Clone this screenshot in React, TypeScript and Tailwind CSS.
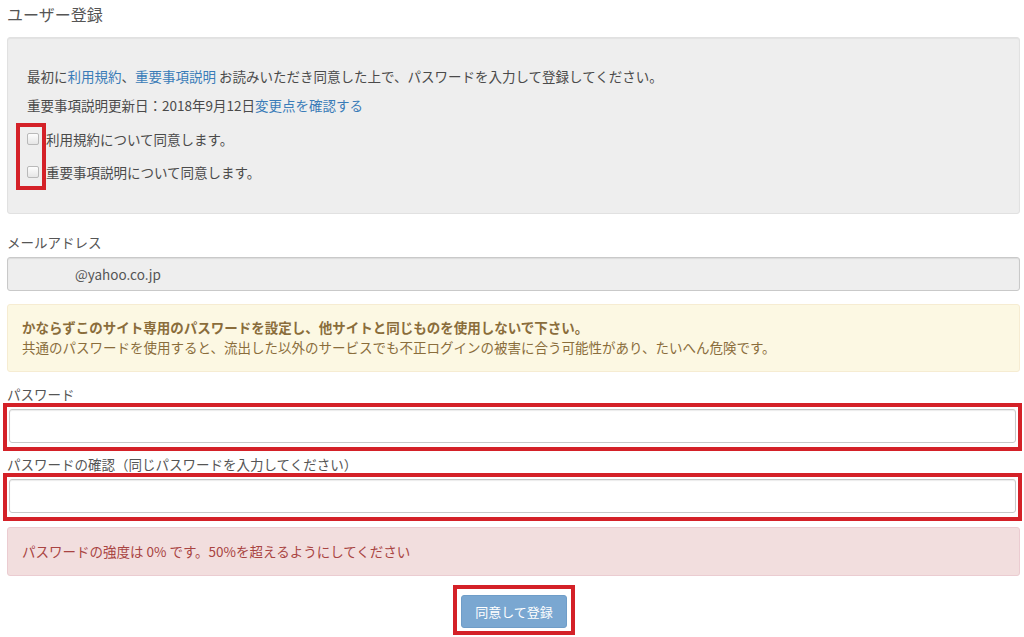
import React from 'react';

const font = { fontFamily: '"Noto Sans CJK JP", "Noto Sans", sans-serif' };

function Check() {
    return (
        <span className="inline-block h-[12px] w-[12px] shrink-0 rounded-[2px] border border-[#b9b9b9] bg-gradient-to-b from-[#fdfdfd] to-[#e6e6e6]" />
    );
}

function Field({ value }: { value?: string }) {
    return (
        <div className="h-[34px] rounded-[3px] border border-[#c9c9c9] bg-white shadow-[inset_0_1px_1px_rgba(0,0,0,0.08)]">
            {value}
        </div>
    );
}

export default function App() {
    return (
        <div style={font} className="h-[637px] w-[1024px] overflow-hidden bg-white text-[13.5px] text-[#4a4a4a]">
            <div className="pl-[7px] pt-[4px] text-[16px] leading-[20px] text-[#555]">ユーザー登録</div>

            {/* well */}
            <div className="ml-[7px] mr-[4px] mt-[13px] rounded-[3px] border border-[#e1e1e1] bg-[#eeeeee] px-[19px] pb-[31px] pt-[28px] shadow-[inset_0_1px_1px_rgba(0,0,0,0.05)]">
                <p className="leading-[20px]">
                    最初に<a className="text-[#3a7cb8]">利用規約</a>、<a className="text-[#3a7cb8]">重要事項説明</a> お読みいただき同意した上で、パスワードを入力して登録してください。
                </p>
                <p className="mt-[9px] leading-[20px]">
                    重要事項説明更新日：2018年9月12日<a className="text-[#3a7cb8]">変更点を確認する</a>
                </p>
                <div className="relative mt-[14px]">
                    <label className="flex h-[20px] items-center gap-[7px]">
                        <Check />
                        <span>利用規約について同意します。</span>
                    </label>
                    <label className="mt-[13px] flex h-[20px] items-center gap-[7px]">
                        <Check />
                        <span>重要事項説明について同意します。</span>
                    </label>
                    <div className="pointer-events-none absolute left-[-11px] top-[-6px] h-[67px] w-[30px] border-4 border-[#d42128]" />
                </div>
            </div>

            <div className="ml-[7px] mt-[18px] leading-[20px] text-[#555]">メールアドレス</div>
            <div className="ml-[7px] mr-[4px] mt-[5px] flex h-[34px] items-center rounded-[3px] border border-[#c9c9c9] bg-[#eeeeee] pl-[67px] text-[#555] shadow-[inset_0_1px_1px_rgba(0,0,0,0.08)]">
                @yahoo.co.jp
            </div>

            {/* warning */}
            <div className="ml-[7px] mr-[4px] mt-[13px] rounded-[3px] border border-[#f6ecd2] bg-[#fcf8e3] px-[14px] pb-[14px] pt-[12px] leading-[20px] text-[#8a6d3b]">
                <p className="font-bold">かならずこのサイト専用のパスワードを設定し、他サイトと同じものを使用しないで下さい。</p>
                <p>共通のパスワードを使用すると、流出した以外のサービスでも不正ログインの被害に合う可能性があり、たいへん危険です。</p>
            </div>

            <div className="ml-[7px] mt-[13px] leading-[18px] text-[#555]">パスワード</div>
            <div className="ml-[3px] mr-[2px] border-4 border-[#d42128] p-[2px] pb-[4px]">
                <Field />
            </div>

            <div className="ml-[7px] mt-[4px] leading-[18px] text-[#555]">パスワードの確認（同じパスワードを入力してください）</div>
            <div className="ml-[3px] mr-[2px] border-4 border-[#d42128] p-[2px] pb-[4px]">
                <Field />
            </div>

            {/* danger */}
            <div className="ml-[7px] mr-[4px] mt-[6px] flex h-[49px] items-center rounded-[3px] border border-[#ebccd1] bg-[#f2dede] px-[14px] text-[#a94442]">
                パスワードの強度は 0% です。50%を超えるようにしてください
            </div>

            <div className="mt-[9px] flex justify-center">
                <div className="ml-[4px] border-4 border-[#d42128] px-[4px] pb-[3px] pt-[6px]">
                    <button
                        disabled
                        className="h-[33px] w-[106px] rounded-[3px] border border-[#6f9dc8] bg-[#7aa7d1] text-[13px] text-white"
                    >
                        同意して登録
                    </button>
                </div>
            </div>
        </div>
    );
}
